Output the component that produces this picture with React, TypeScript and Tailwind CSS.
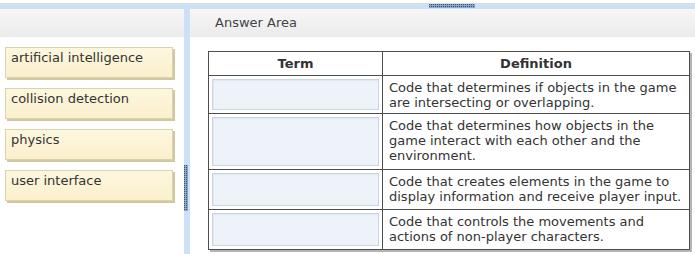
const terms = ["artificial intelligence", "collision detection", "physics", "user interface"];

const rows = [
  { h: "h-[38px]", text: "Code that determines if objects in the game are intersecting or overlapping." },
  { h: "h-[56px]", text: "Code that determines how objects in the game interact with each other and the environment." },
  { h: "h-[40px]", text: "Code that creates elements in the game to display information and receive player input." },
  { h: "h-[39px]", text: "Code that controls the movements and actions of non-player characters." },
];

// dotted grip drawn on splitter bars
const Grip = ({ w, h, className }: { w: number; h: number; className: string }) => (
  <svg width={w} height={h} className={className}>
    <defs>
      <pattern id={`dots-${w}-${h}`} width="2" height="2" patternUnits="userSpaceOnUse">
        <rect width="2" height="2" fill="#8da7c8" />
        <rect width="1" height="1" fill="#2f4e78" />
      </pattern>
    </defs>
    <rect width={w} height={h} fill={`url(#dots-${w}-${h})`} />
  </svg>
);

export default function App() {
  return (
    <div className="w-[695px] h-[254px] bg-white overflow-hidden flex flex-col font-['DejaVu_Sans',Verdana,sans-serif] text-[13px] text-[#333]">
      <div className="h-[3px] bg-white" />
      <div className="h-[6px] bg-[#cfe0f3] flex items-center">
        <Grip w={46} h={4} className="ml-[429px]" />
      </div>

      <div className="flex flex-1">
        {/* draggable terms */}
        <div className="w-[184px] flex flex-col">
          <div className="h-[28px] bg-gradient-to-b from-[#f7f7f7] to-[#ebebeb]" />
          <div className="flex flex-col gap-[10px] pl-[5px] pt-[10px]">
            {terms.map((t) => (
              <div
                key={t}
                className="w-[168px] h-[31px] bg-gradient-to-b from-[#fdf7df] to-[#fbf0cc] border border-[#ddd3a8] shadow-[2px_2px_0_#cfc8a8] px-[5px] pt-[2px] leading-[16px]"
              >
                {t}
              </div>
            ))}
          </div>
        </div>

        {/* splitter */}
        <div className="w-[6px] bg-[#cde0f5] flex flex-col">
          <Grip w={4} h={46} className="mt-[156px]" />
        </div>

        {/* answer area */}
        <div className="flex-1 flex flex-col">
          <div className="h-[28px] bg-gradient-to-b from-[#f7f7f7] to-[#ebebeb] pl-[25px] flex items-center text-[#444]">
            Answer Area
          </div>
          <div className="pl-[18px] pt-[14px]">
            <div className="w-[482px] border border-[#4d4d4d] shadow-[2px_2px_0_#b5b5b5]">
              <div className="flex h-[24px] border-b border-[#4d4d4d] font-bold leading-[24px]">
                <div className="w-[174px] border-r border-[#4d4d4d] text-center">Term</div>
                <div className="flex-1 text-center">Definition</div>
              </div>
              {rows.map((r, i) => (
                <div
                  key={i}
                  className={`flex ${r.h} ${i < rows.length - 1 ? "border-b border-[#4d4d4d]" : ""}`}
                >
                  <div className="w-[174px] border-r border-[#4d4d4d] p-[3px]">
                    <div className="h-full bg-[#eef3fa] border border-[#c9d5e2] shadow-[inset_1px_1px_0_#e0e8f2]" />
                  </div>
                  <div className="flex-1 pl-[6px] pr-[4px] pt-[4px] leading-[15px]">{r.text}</div>
                </div>
              ))}
            </div>
          </div>
        </div>
      </div>
    </div>
  );
}
